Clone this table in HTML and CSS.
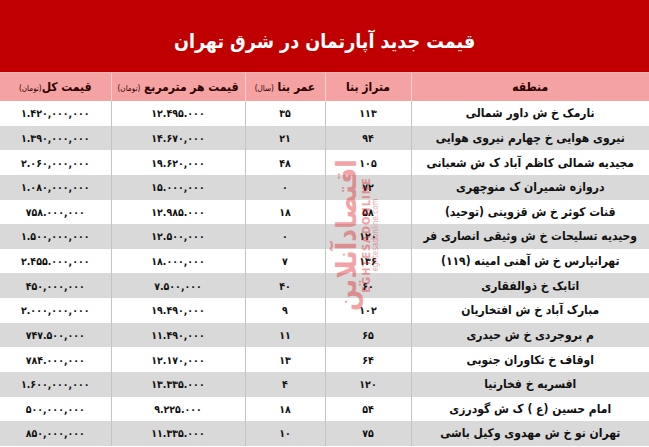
FILE: index.html
```html
<!DOCTYPE html>
<html lang="fa" dir="rtl">
<head>
<meta charset="utf-8">
<title>قیمت جدید آپارتمان در شرق تهران</title>
<link rel="stylesheet" href="styles.css">
</head>
<body>
<div class="page">
  <div class="banner"><h1 class="title">قیمت جدید آپارتمان در شرق تهران</h1></div>
  <table class="grid">
    <colgroup>
      <col class="c-region"><col class="c-area"><col class="c-age"><col class="c-ppm"><col class="c-total">
    </colgroup>
    <thead>
      <tr>
        <th>منطقه</th>
        <th>متراژ بنا</th>
        <th>عمر بنا <small>(سال)</small></th>
        <th>قیمت هر مترمربع <small>(تومان)</small></th>
        <th>قیمت کل<small>(تومان)</small></th>
      </tr>
    </thead>
    <tbody>
      <tr><td class="name">نارمک خ ش داور شمالی</td><td>۱۱۳</td><td>۳۵</td><td>۱۲.۴۹۵.۰۰۰</td><td>۱.۴۲۰,۰۰۰,۰۰۰</td></tr>
      <tr><td class="name">نیروی هوایی خ چهارم نیروی هوایی</td><td>۹۴</td><td>۲۱</td><td>۱۴.۶۷۰,۰۰۰</td><td>۱.۳۹۰,۰۰۰,۰۰۰</td></tr>
      <tr><td class="name">مجیدیه شمالی کاظم  آباد ک ش شعبانی</td><td>۱۰۵</td><td>۴۸</td><td>۱۹.۶۲۰,۰۰۰</td><td>۲.۰۶۰,۰۰۰,۰۰۰</td></tr>
      <tr><td class="name">دروازه شمیران ک منوچهری</td><td>۷۲</td><td>۰</td><td>۱۵.۰۰۰,۰۰۰</td><td>۱.۰۸۰,۰۰۰,۰۰۰</td></tr>
      <tr><td class="name">قنات کوثر خ ش قزوینی (توحید)</td><td>۵۸</td><td>۱۸</td><td>۱۲.۹۸۵.۰۰۰</td><td>۷۵۸.۰۰۰,۰۰۰</td></tr>
      <tr><td class="name">وحیدیه  تسلیحات خ ش وثیقی انصاری فر</td><td>۱۲۰</td><td>۰</td><td>۱۲.۵۰۰,۰۰۰</td><td>۱.۵۰۰,۰۰۰,۰۰۰</td></tr>
      <tr><td class="name">تهرانپارس خ ش آهنی امینه (۱۱۹)</td><td>۱۳۶</td><td>۷</td><td>۱۸.۰۰۰,۰۰۰</td><td>۲.۴۵۵.۰۰۰,۰۰۰</td></tr>
      <tr><td class="name">اتابک خ ذوالفقاری</td><td>۶۰</td><td>۴۰</td><td>۷.۵۰۰,۰۰۰</td><td>۴۵۰,۰۰۰,۰۰۰</td></tr>
      <tr><td class="name">مبارک آباد خ ش افتخاریان</td><td>۱۰۲</td><td>۹</td><td>۱۹.۴۹۰,۰۰۰</td><td>۲.۰۰۰,۰۰۰,۰۰۰</td></tr>
      <tr><td class="name">م بروجردی خ ش حیدری</td><td>۶۵</td><td>۱۱</td><td>۱۱.۴۹۰,۰۰۰</td><td>۷۴۷.۵۰۰,۰۰۰</td></tr>
      <tr><td class="name">اوقاف خ تکاوران جنوبی</td><td>۶۴</td><td>۱۳</td><td>۱۲.۱۷۰,۰۰۰</td><td>۷۸۴.۰۰۰,۰۰۰</td></tr>
      <tr><td class="name">افسریه خ فخارنیا</td><td>۱۲۰</td><td>۴</td><td>۱۳.۳۳۵.۰۰۰</td><td>۱.۶۰۰,۰۰۰,۰۰۰</td></tr>
      <tr><td class="name">امام حسین (ع ) ک ش گودرزی</td><td>۵۴</td><td>۱۸</td><td>۹.۲۲۵.۰۰۰</td><td>۵۰۰,۰۰۰,۰۰۰</td></tr>
      <tr><td class="name">تهران نو خ ش مهدوی وکیل باشی</td><td>۷۵</td><td>۱۰</td><td>۱۱.۳۳۵.۰۰۰</td><td>۸۵۰,۰۰۰,۰۰۰</td></tr>
    </tbody>
  </table>
  <div class="watermark" aria-hidden="true">
    <span class="wm-fa">اقتصادآنلاین</span>
    <span class="wm-en">EGHTESADONLINE</span>
    <span class="wm-url">eghtesadonline.com</span>
  </div>
</div>
</body>
</html>
```

FILE: styles.css
```css
html, body {
  margin: 0;
  padding: 0;
  background: #ffffff;
}

.page {
  position: relative;
  width: 649px;
  height: 447px;
  overflow: hidden;
  font-family: "DejaVu Sans Condensed", "DejaVu Sans", sans-serif;
  direction: rtl;
}

.banner {
  height: 73px;
  background: #c00000;
  display: flex;
  align-items: center;
  justify-content: center;
  padding-top: 10px;
  box-sizing: border-box;
  border-bottom: 1px solid #e9b5b5;
}

.title {
  margin: 0;
  color: #ffffff;
  font-family: "DejaVu Sans Condensed", "DejaVu Sans", sans-serif;
  font-size: 19.5px;
  font-weight: bold;
  letter-spacing: -0.3px;
}

.grid {
  width: 649px;
  table-layout: fixed;
  border-collapse: collapse;
  direction: rtl;
}

.c-region { width: 238px; }
.c-area { width: 86px; }
.c-age { width: 80px; }
.c-ppm { width: 134px; }
.c-total { width: 111px; }

.grid th {
  height: 28px;
  padding: 0;
  background: #f4a2a2;
  color: #2a0000;
  font-size: 12px;
  font-weight: bold;
  text-align: center;
  white-space: nowrap;
  border-left: 1px solid #f7d2d2;
}

.grid th small {
  font-size: 8px;
  font-weight: normal;
}

.grid td {
  height: 24.64px;
  padding: 0;
  box-sizing: border-box;
  text-align: center;
  font-size: 10.5px;
  font-weight: bold;
  color: #111111;
  border-left: 1px solid #c4c4c4;
  white-space: nowrap;
  overflow: hidden;
}

.grid th:last-child,
.grid td:last-child {
  border-left: none;
}

.grid td.name {
  font-size: 12px;
}

.grid tbody tr:nth-child(even) td {
  background: #d9d9d9;
}

.watermark {
  position: absolute;
  left: 286px;
  top: 135px;
  width: 140px;
  height: 200px;
  display: flex;
  flex-direction: column;
  align-items: center;
  justify-content: center;
  transform: rotate(-90deg);
  transform-origin: center;
  opacity: 0.42;
  pointer-events: none;
}

.watermark span {
  display: block;
  white-space: nowrap;
  color: #e0262c;
  line-height: 1;
}

.wm-fa {
  font-size: 28px;
  font-weight: bold;
}

.wm-en {
  font-size: 11px;
  font-weight: bold;
  color: #e35a5e;
  letter-spacing: 1px;
  direction: ltr;
}

.wm-url {
  font-size: 8px;
  color: #e35a5e;
  direction: ltr;
}
```
